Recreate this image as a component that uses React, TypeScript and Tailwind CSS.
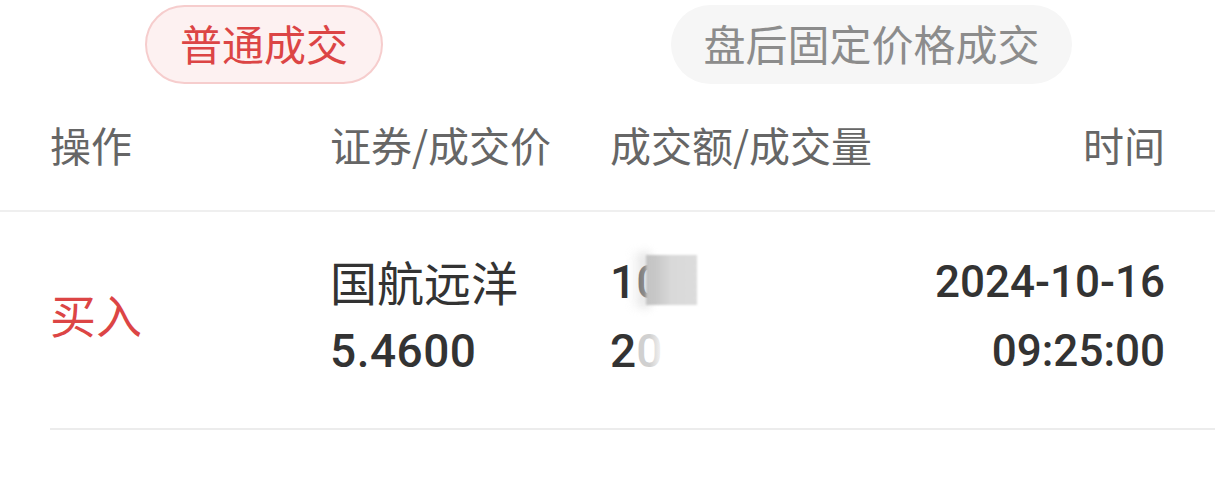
import React from "react";

const cjk = { fontFamily: '"Noto Sans CJK SC", "Noto Sans", sans-serif' };
const num = { fontFamily: 'Roboto, "Noto Sans CJK SC", sans-serif' };

export default function App() {
  return (
    <div className="w-[1215px] h-[500px] bg-white overflow-hidden" style={cjk}>
      {/* tabs */}
      <div className="flex pt-[5px] pl-[145px] gap-[288px]">
        <div className="h-[79px] w-[238px] rounded-full border-2 border-[#f6cdcd] bg-[#fdf1f1] flex items-center justify-center text-[42px] text-[#dc4545] leading-none pb-[3px]">
          普通成交
        </div>
        <div className="h-[79px] w-[401px] rounded-full bg-[#f6f6f6] flex items-center justify-center text-[42px] text-[#8c8c8c] leading-none pb-[3px]">
          盘后固定价格成交
        </div>
      </div>

      {/* header */}
      <div className="grid grid-cols-[280px_280px_1fr_auto] items-center px-[50px] h-[128px] pb-[6px] border-b-2 border-[#efefef] text-[41px] text-[#666666] leading-none">
        <div>操作</div>
        <div>证券/成交价</div>
        <div>成交额/成交量</div>
        <div className="text-right">时间</div>
      </div>

      {/* row */}
      <div className="ml-[50px] border-b-2 border-[#ececec]">
        <div className="grid grid-cols-[280px_280px_1fr_auto] items-center pr-[50px] h-[216px] pb-[6px]">
          <div className="text-[46px] text-[#dc4545] leading-none mb-[8px]">买入</div>
          <div className="flex flex-col text-[#333333] leading-[69px]">
            <div className="text-[47px] -mt-[2px] mb-[2px]">国航远洋</div>
            <div className="text-[46px] font-medium tracking-[0.5px]" style={num}>5.4600</div>
          </div>
          <div className="flex flex-col text-[#333333] leading-[69px] text-[46px] font-medium" style={num}>
            <div className="relative h-[69px]">
              <span>1</span>
              <span className="text-[#555555]">0</span>
              <div className="absolute left-[36px] top-[7px] w-[51px] h-[50px] bg-gradient-to-r from-[#bdbdbd] via-[#d9d9d9] to-[#dcdcdc] blur-[1px]"></div>
              <div className="absolute left-[20px] top-[4px] w-[20px] h-[56px] bg-gradient-to-r from-transparent to-[#cfcfcf] blur-[4px] opacity-70"></div>
            </div>
            <div className="relative h-[69px]">
              <span>2</span>
              <span className="text-[#d0d0d0]">0</span>
              <div className="absolute left-[40px] top-[8px] w-[30px] h-[52px] bg-gradient-to-r from-transparent via-white to-white"></div>
            </div>
          </div>
          <div className="flex flex-col items-end text-[#333333] leading-[69px] text-[44px] font-medium" style={num}>
            <div>2024-10-16</div>
            <div>09:25:00</div>
          </div>
        </div>
      </div>
    </div>
  );
}
